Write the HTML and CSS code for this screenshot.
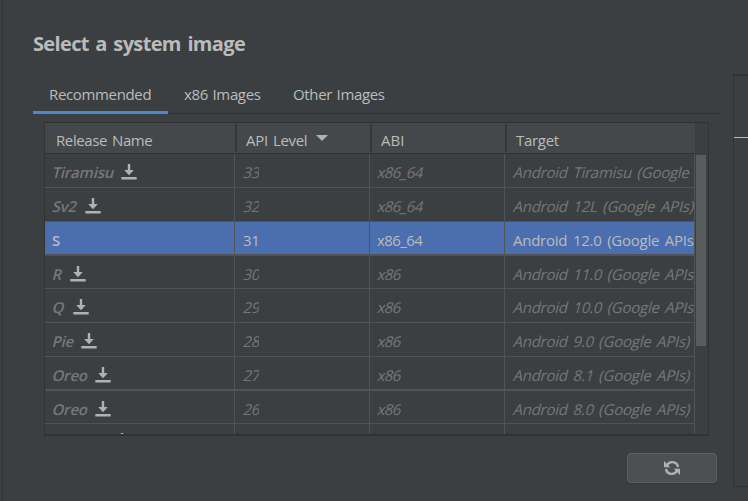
FILE: index.html
```html
<!DOCTYPE html>
<html lang="en">
<head>
<meta charset="utf-8">
<title>Select a system image</title>
<link rel="stylesheet" href="styles.css">
</head>
<body>
<svg class="defs" aria-hidden="true">
  <symbol id="dl" viewBox="0 0 16 16"><path d="M6.800 0h2.400v6h3.600L8 11.300 3.200 6h3.600zM.3 13h15.400v2.400H.3z" fill="#afb1b3"/></symbol>
</svg>
<main class="panel">
  <h1>Select a system image</h1>
  <nav class="tabs">
    <a class="tab active"><span>Recommended</span></a>
    <a class="tab x86"><span>x86 Images</span></a>
    <a class="tab other"><span>Other Images</span></a>
  </nav>
  <section class="table">
    <div class="grid">
      <div class="row head">
        <div><span class="h1c">Release Name</span></div>
        <div><span class="h2c">API Level</span><i class="sort"></i></div>
        <div><span class="h3c">ABI</span></div>
        <div><span class="h4c">Target</span></div>
      </div>
      <div class="row off"><div><b class="w-tir"><span>Tiramisu</span></b><svg><use href="#dl"/></svg></div><div><em class="n"><span>33</span></em></div><div><em class="a64"><span>x86_64</span></em></div><div><em class="t"><span>Android Tiramisu (Google</span></em></div></div>
      <div class="row off"><div><b class="w-sv"><span>Sv2</span></b><svg><use href="#dl"/></svg></div><div><em class="n"><span>32</span></em></div><div><em class="a64"><span>x86_64</span></em></div><div><em class="t"><span>Android 12L (Google APIs)</span></em></div></div>
      <div class="row on thick"><div><b class="w-s"><span>S</span></b></div><div><em class="n"><span>31</span></em></div><div><em class="a64"><span>x86_64</span></em></div><div><em class="t"><span>Android 12.0 (Google APIs)</span></em></div></div>
      <div class="row off short"><div><b class="w-r"><span>R</span></b><svg><use href="#dl"/></svg></div><div><em class="n"><span>30</span></em></div><div><em class="a"><span>x86</span></em></div><div><em class="t"><span>Android 11.0 (Google APIs)</span></em></div></div>
      <div class="row off"><div><b class="w-q"><span>Q</span></b><svg><use href="#dl"/></svg></div><div><em class="n"><span>29</span></em></div><div><em class="a"><span>x86</span></em></div><div><em class="t"><span>Android 10.0 (Google APIs)</span></em></div></div>
      <div class="row off"><div><b class="w-pie"><span>Pie</span></b><svg><use href="#dl"/></svg></div><div><em class="n"><span>28</span></em></div><div><em class="a"><span>x86</span></em></div><div><em class="t s"><span>Android 9.0 (Google APIs)</span></em></div></div>
      <div class="row off thick"><div><b class="w-oreo"><span>Oreo</span></b><svg><use href="#dl"/></svg></div><div><em class="n"><span>27</span></em></div><div><em class="a"><span>x86</span></em></div><div><em class="t s"><span>Android 8.1 (Google APIs)</span></em></div></div>
      <div class="row off short"><div><b class="w-oreo"><span>Oreo</span></b><svg><use href="#dl"/></svg></div><div><em class="n"><span>26</span></em></div><div><em class="a"><span>x86</span></em></div><div><em class="t s"><span>Android 8.0 (Google APIs)</span></em></div></div>
      <div class="row off last"><div><svg><use href="#dl"/></svg></div><div></div><div></div><div></div></div>
    </div>
    <div class="track"><div class="thumb"></div></div>
  </section>
  <div class="actions">
    <button aria-label="Refresh"><svg width="16" height="16" viewBox="0 0 16 16"><g fill="none" stroke="#afb1b3" stroke-width="2.4"><path d="M3 5.5A5.8 5.8 0 0 1 14 7"/><path d="M13 10.5A5.8 5.8 0 0 1 2 9"/></g><path d="M0 1v6.200h6.200zM16 15V8.800H9.800z" fill="#afb1b3"/></svg></button>
  </div>
</main>
<aside><div class="rule"></div></aside>
</body>
</html>
```
FILE: styles.css
```css
* { box-sizing: border-box; }
body {
  margin: 0; width: 748px; height: 501px; overflow: hidden;
  background: #3c3f41; color: #bbbbbb; display: flex;
  font: 15px/20px "Open Sans", sans-serif;
}
.defs { display: none; }
.panel { width: 718px; margin-left: 2px; padding-left: 30px; border-left: 1px solid #323232; flex: none; }
h1 { margin: 30px 0 0; font-size: 20px; line-height: 28px; font-weight: 700; letter-spacing: -0.65px; word-spacing: 2px; white-space: nowrap; height: 28px; }
.tabs { display: flex; width: 687px; height: 34px; margin-top: 22px; border-bottom: 1px solid #323232; line-height: 28px; letter-spacing: -0.35px; word-spacing: 1px; white-space: nowrap; }
.tab { height: 34px; flex: none; }
.tab.active { width: 135px; padding-left: 16px; border-bottom: 3px solid #4a88c7; }
.tab.x86 { width: 110px; padding-left: 16px; }
.tab.other { padding-left: 15px; }
.table { display: flex; width: 665px; height: 314px; margin: 8px 0 0 11px; border: 1px solid #323232; border-bottom-width: 2px; overflow: hidden; }
.grid { width: 650px; flex: none; }
.row { display: grid; grid-template-columns: 190px 135px 135px 190px; height: 34px; border-bottom: 1px solid #515355; line-height: 36px; white-space: nowrap; }
.row > div { border-right: 1px solid #515355; padding-left: 7px; overflow: hidden; display: flex; align-items: flex-start; min-width: 0; }
.row.short { height: 33px; }
.row.thick { border-bottom-width: 2px; }
.row.head { height: 31px; line-height: 34px; background: #45484a; border-bottom: 1px solid #323232; }
.row.head > div { border: 0; padding: 0 0 0 11px; position: relative; }
.row.head > div + div::before { content: ""; position: absolute; left: 0; top: 1px; width: 2px; height: 28px; background: #35383a; }
.h1c { letter-spacing: -0.4px; word-spacing: 1.5px; }
.h2c { letter-spacing: -0.3px; word-spacing: 1.5px; }
.h4c { letter-spacing: -0.3px; }
.sort { border: 6px solid transparent; border-top: 6px solid #afb1b3; border-bottom: 0; margin: 12px 0 0 9px; }
.row b, .row em { display: block; overflow: hidden; font-style: normal; flex: none; height: 32px; }
.row b { font-weight: 600; letter-spacing: -0.2px; }
.row span { display: inline-block; }
.off { color: #777777; }
.off span { transform: skewX(-14deg); transform-origin: 0 22px; }
.on { background: #4b6eaf; color: #bbbbbb; }
.n { width: 17px; letter-spacing: -0.3px; padding-left: 1px; }
.a, .a64 { width: 24px; letter-spacing: -0.6px; }
.a64 { width: 47px; }
.t { width: 182px; padding-left: 1px; letter-spacing: -0.25px; word-spacing: 2px; }
.t.s { width: 179px; }
.row svg { width: 16px; height: 16px; margin: 10px 0 0 7px; flex: none; }
.w-tir { width: 62px; }
.w-sv { width: 26px; }
.w-s { width: 10px; }
.w-r { width: 11px; }
.w-q { width: 14px; }
.w-pie { width: 22px; }
.w-oreo { width: 36px; }
.row.last { height: 10px; border: 0; }
.row.last svg { margin: 9px 0 0 62px; }
.track { width: 13px; padding: 32px 1px 0; }
.thumb { width: 10px; height: 191px; background: #595c5c; }
.actions { display: flex; justify-content: flex-end; width: 684px; margin-top: 17px; }
button { width: 90px; height: 30px; border: 1px solid #5e6060; border-radius: 4px; background: #4c5052; padding: 0; display: grid; place-items: center; box-shadow: 0 1px 1px #35383a; }
aside { width: 15px; height: 413px; margin: 74px 0 0 13px; border: solid #323232; border-width: 2px 0 1px 1px; flex: none; }
.rule { height: 1px; background: #bbbbbb; margin-top: 61px; }
```
